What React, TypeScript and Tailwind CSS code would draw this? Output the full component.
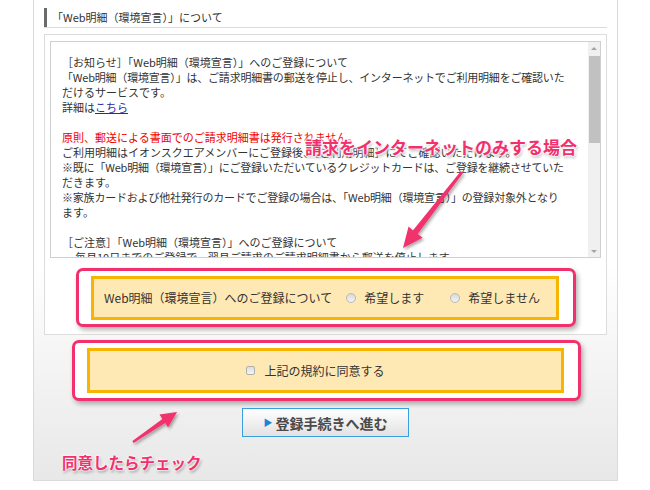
import React from "react";

const Radio = () => (
  <span className="inline-block w-[10px] h-[10px] rounded-full border border-[#b9b9b9] bg-linear-to-b from-[#d9d9d9] to-[#f4f4f4] shrink-0" />
);

export default function App() {
  const line = "h-[15px] leading-[15px] whitespace-nowrap";
  return (
    <div className="relative w-[650px] h-[490px] bg-white overflow-hidden font-['Noto_Sans_CJK_JP','Noto_Sans',sans-serif] text-[#333]">
      <div className="ml-[33px] w-[585px] h-[481px] border-x border-b border-[#dadada] bg-linear-to-b from-white from-55% to-[#e8e8e8] px-[10px] pt-[8px] flex flex-col">
        {/* heading */}
        <div className="h-[20px] border-b border-[#dcdcdc] flex">
          <div className="h-[19px] border-l-[3px] border-[#6b6b6b] pl-[5px] text-[11px] leading-[19px] whitespace-nowrap">
            「Web明細（環境宣言）」について
          </div>
        </div>

        {/* content box */}
        <div className="mt-[6px] border border-[#dcdcdc] bg-white px-[5px] pt-[6px] pb-[7px]">
          <div className="h-[217px] border border-[#d0d0d0] flex overflow-hidden">
            <div className="flex-1 pl-[11px] pt-[13px] text-[11px] overflow-hidden">
              <div className={line}>［お知らせ］「Web明細（環境宣言）」へのご登録について</div>
              <div className={line + " tracking-[-0.2px]"}>「Web明細（環境宣言）」は、ご請求明細書の郵送を停止し、インターネットでご利用明細をご確認いた</div>
              <div className={line}>だけるサービスです。</div>
              <div className={line}>
                詳細は<span className="text-[#2a2aa6] underline">こちら</span>
              </div>
              <div className={line} />
              <div className={line + " text-[#f00000]"}>原則、郵送による書面でのご請求明細書は発行されません。</div>
              <div className={line}>ご利用明細はイオンスクエアメンバーにご登録後、［ご利用明細］にてご確認いただけます。</div>
              <div className={line + " tracking-[-0.2px]"}>※既に「Web明細（環境宣言）」にご登録いただいているクレジットカードは、ご登録を継続させていた</div>
              <div className={line}>だきます。</div>
              <div className={line + " tracking-[-0.2px]"}>※家族カードおよび他社発行のカードでご登録の場合は、「Web明細（環境宣言）」の登録対象外となり</div>
              <div className={line}>ます。</div>
              <div className={line} />
              <div className={line}>［ご注意］「Web明細（環境宣言）」へのご登録について</div>
              <div className={line + " flex"}>
                <span className="w-[13px] pl-[2px]">•</span>
                <span>毎月10日までのご登録で、翌月ご請求のご請求明細書から郵送を停止します。</span>
              </div>
            </div>
            {/* scrollbar */}
            <div className="w-[12px] bg-[#f0f0f0] flex flex-col items-center">
              <div className="h-[12px] flex items-center justify-center">
                <span className="w-0 h-0 border-x-[3px] border-x-transparent border-b-[3px] border-b-[#a3a3a3]" />
              </div>
              <div className="mt-[2px] w-[11px] h-[87px] bg-[#c1c1c1]" />
              <div className="flex-1" />
              <div className="h-[12px] flex items-center justify-center">
                <span className="w-0 h-0 border-x-[3px] border-x-transparent border-t-[3px] border-t-[#a3a3a3]" />
              </div>
            </div>
          </div>

          {/* highlighted radio row */}
          <div className="mt-[10px] ml-[26px] mr-[25px] h-[59px] border-[3px] border-[#f2306d] rounded-[7px] bg-white shadow-[2px_3px_5px_rgba(0,0,0,0.3)] pl-[12px] pr-[14px] pt-[5px] pb-[4px]">
            <div className="h-full border-[3px] border-[#f7b400] bg-[#fee8b3] flex items-center pl-[10px] text-[12px] whitespace-nowrap">
              <span>Web明細（環境宣言）へのご登録について</span>
              <span className="ml-[14px] flex items-center gap-[8px]">
                <Radio />
                <span>希望します</span>
              </span>
              <span className="ml-[26px] flex items-center gap-[8px]">
                <Radio />
                <span>希望しません</span>
              </span>
            </div>
          </div>
        </div>

        {/* agreement row */}
        <div className="mt-[5px] ml-[28px] mr-[26px] h-[61px] border-[3px] border-[#f2306d] rounded-[7px] bg-white shadow-[2px_3px_5px_rgba(0,0,0,0.3)] pl-[12px] pr-[14px] pt-[5px] pb-[5px]">
          <div className="h-full border-[3px] border-[#f7b400] bg-[#fee8b3] flex items-center justify-center pr-[20px] text-[12px] whitespace-nowrap">
            <span className="inline-block w-[9px] h-[9px] rounded-[2px] border border-[#b0b0b0] bg-linear-to-b from-[#dedede] to-[#f4f4f4]" />
            <span className="ml-[9px]">上記の規約に同意する</span>
          </div>
        </div>

        {/* button */}
        <div className="mt-[7px] flex justify-center">
          <div className="w-[167px] h-[29px] border border-[#3a9fe0] bg-linear-to-b from-white to-[#e2e2e2] flex items-center justify-center gap-[3px] whitespace-nowrap">
            <span className="text-[#1b86d3] text-[9px] leading-none">▶</span>
            <span className="text-[14px] font-bold text-[#4a4a4a] leading-none">登録手続きへ進む</span>
          </div>
        </div>
      </div>

      {/* annotations */}
      <svg className="absolute left-0 top-0 pointer-events-none" width="650" height="490" viewBox="0 0 650 490">
        <defs>
          <filter id="ds" x="-20%" y="-20%" width="140%" height="140%">
            <feDropShadow dx="1.5" dy="2" stdDeviation="1.5" floodColor="#000" floodOpacity="0.35" />
          </filter>
        </defs>
        <polygon
          filter="url(#ds)"
          fill="#f2306d"
          points="463.2,172.8 417.7,234.0 422.6,237.8 403,248 408.6,226.6 412.9,230.4 460.8,171.2"
        />
        <polygon
          filter="url(#ds)"
          fill="#f2306d"
          points="133.6,442.9 165.2,423.1 168.1,427.5 177,412 159.5,414.6 162.4,418.9 132.4,441.1"
        />
      </svg>
      <div className="absolute left-[305px] top-[137px] h-[20px] leading-[20px] text-[17px] font-bold text-[#f2306d] whitespace-nowrap [text-shadow:0_0_2px_#fff,0_0_2px_#fff,0_0_3px_#fff,0_0_3px_#fff,0_0_4px_#fff,1px_2px_3px_rgba(0,0,0,0.4)]">
        請求をインターネットのみする場合
      </div>
      <div className="absolute left-[62px] top-[452px] h-[20px] leading-[20px] text-[15.5px] font-bold text-[#f2306d] whitespace-nowrap [text-shadow:0_0_2px_#fff,0_0_2px_#fff,0_0_3px_#fff,1px_2px_3px_rgba(0,0,0,0.4)]">
        同意したらチェック
      </div>
    </div>
  );
}
